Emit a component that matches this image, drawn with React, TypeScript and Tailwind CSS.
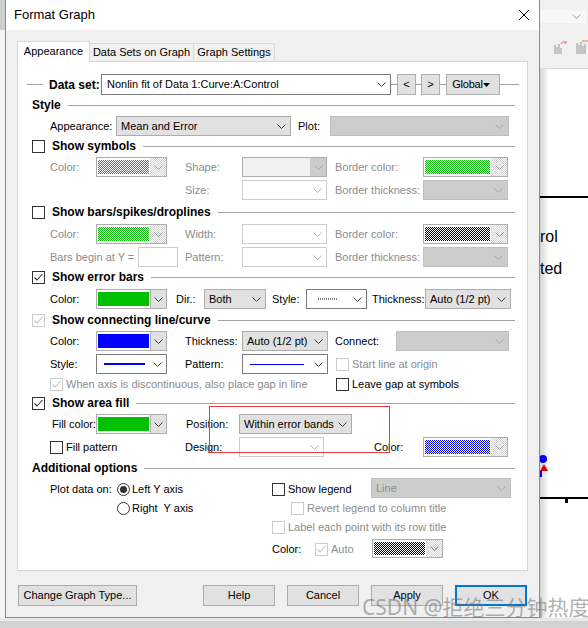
import clsx from "clsx";
import type { ReactNode } from "react";

type Tone = "gray" | "white" | "dark" | "off" | "offWhite" | "shape";

const toneBox: Record<Tone, string> = {
  gray: "border-[#adadad] bg-[#e1e1e1]",
  white: "border-[#adadad] bg-white",
  dark: "border-[#7a7a7a] bg-white",
  off: "border-[#bfbfbf] bg-[#cccccc] text-[#8c8c8c]",
  offWhite: "border-[#cccccc] bg-white",
  shape: "border-[#adadad] bg-[#f0f0f0]",
};

const toneArrow: Record<Tone, string> = {
  gray: "#3c3c3c",
  white: "#3c3c3c",
  dark: "#3c3c3c",
  off: "#a6a6a6",
  offWhite: "#b4b4b4",
  shape: "#a6a6a6",
};

const fills = {
  greenDots:
    "bg-[image:repeating-conic-gradient(#00b800_0%_25%,#ffffff_0%_50%)] bg-[length:2px_2px]",
  blackDots:
    "bg-[image:repeating-conic-gradient(#000000_0%_25%,#ffffff_0%_50%)] bg-[length:2px_2px]",
  blueDots:
    "bg-[image:repeating-conic-gradient(#0000ff_0%_25%,#ffffff_0%_50%)] bg-[length:2px_2px]",
  green: "bg-[#00c000]",
  blue: "bg-[#0000ff]",
};

const Chevron = ({ color }: { color: string }) => (
  <svg width="9" height="5" viewBox="0 0 9 5" className="shrink-0">
    <path d="M0.5 0.5 L4.5 4.5 L8.5 0.5" fill="none" stroke={color} strokeWidth="1" />
  </svg>
);

const Label = ({
  children,
  off,
  className,
}: {
  children: ReactNode;
  off?: boolean;
  className?: string;
}) => (
  <span
    className={clsx(
      "flex h-[20px] shrink-0 items-center whitespace-pre",
      off ? "text-[#8c8c8c]" : "text-black",
      className
    )}
  >
    {children}
  </span>
);

const Combo = ({
  tone,
  className,
  tall,
  children,
}: {
  tone: Tone;
  className: string;
  tall?: boolean;
  children?: ReactNode;
}) => (
  <div
    className={clsx(
      "flex shrink-0 items-stretch border",
      tall ? "h-[21px]" : "h-[20px]",
      toneBox[tone],
      className
    )}
  >
    <div className="flex min-w-0 flex-1 items-center overflow-hidden whitespace-nowrap pl-[4px]">
      {children}
    </div>
    {tone === "shape" ? (
      <div className="flex w-[16px] items-center justify-center bg-[#cccccc]">
        <Chevron color={toneArrow[tone]} />
      </div>
    ) : (
      <div className="flex w-[17px] items-center justify-center">
        <Chevron color={toneArrow[tone]} />
      </div>
    )}
  </div>
);

const Swatch = ({
  fill,
  live,
  className,
}: {
  fill: keyof typeof fills;
  live?: boolean;
  className: string;
}) => (
  <div className={clsx("flex shrink-0 border border-[#adadad]", className)}>
    <div className={clsx("my-[2px] ml-[1px] mr-[1px] flex-1", fills[fill])} />
    <div
      className={clsx(
        "flex w-[16px] items-center justify-center",
        live
          ? "border-l border-[#adadad] bg-[#e1e1e1]"
          : "bg-[image:repeating-conic-gradient(#d2d2d2_0%_25%,#ffffff_0%_50%)] bg-[length:2px_2px]"
      )}
    >
      <Chevron color={live ? "#3c3c3c" : "#8c8c8c"} />
    </div>
  </div>
);

const Box = ({ on, off }: { on?: boolean; off?: boolean }) => (
  <span
    className={clsx(
      "flex h-[13px] w-[13px] shrink-0 items-center justify-center border bg-white",
      off ? "border-[#cccccc]" : "border-[#333333]"
    )}
  >
    {on ? (
      <svg width="11" height="11" viewBox="0 0 11 11">
        <path
          d="M1.5 5.5 L4 8 L9.5 2"
          fill="none"
          stroke={off ? "#c2c2c2" : "#333333"}
          strokeWidth="1.1"
        />
      </svg>
    ) : null}
  </span>
);

const Radio = ({ on }: { on?: boolean }) => (
  <span className="flex h-[13px] w-[13px] shrink-0 items-center justify-center rounded-full border border-[#333333] bg-white">
    {on ? <span className="h-[7px] w-[7px] rounded-full bg-[#333333]" /> : null}
  </span>
);

const Header = ({
  box,
  className,
  children,
}: {
  box?: ReactNode;
  className: string;
  children: ReactNode;
}) => (
  <div className={clsx("flex items-start pl-[14px] pr-[12px]", className)}>
    <div className="flex h-[20px] flex-1 items-center">
      {box ? <span className="mr-[7px] flex">{box}</span> : null}
      <span className="whitespace-nowrap text-[12px] font-bold">{children}</span>
      <div className="ml-[7px] h-px flex-1 bg-[#a0a0a0]" />
    </div>
  </div>
);

const Btn = ({
  className,
  focus,
  children,
}: {
  className: string;
  focus?: boolean;
  children: ReactNode;
}) => (
  <div
    className={clsx(
      "flex shrink-0 items-center justify-center bg-[#e1e1e1]",
      focus ? "border-2 border-[#0078d7]" : "border border-[#adadad]",
      className
    )}
  >
    {children}
  </div>
);

const Dash = ({ className }: { className: string }) => (
  <div className={clsx("h-px shrink-0 bg-[#a0a0a0]", className)} />
);

function Panel() {
  return (
    <div className="relative z-0 -mt-px flex h-[510px] flex-col border border-[#d9d9d9] bg-white pt-[12px]">
      {/* data set selector */}
      <div className="flex h-[21px] items-center">
        <Dash className="ml-[9px] w-[16px]" />
        <span className="ml-[6px] w-[52px] shrink-0 text-[12px] font-bold">Data set:</span>
        <Combo tone="dark" tall className="w-[290px]">
          <span className="pl-px">Nonlin fit of Data 1:Curve:A:Control</span>
        </Combo>
        <Dash className="w-[6px]" />
        <Btn className="h-[21px] w-[19px]">&lt;</Btn>
        <Dash className="w-[5px]" />
        <Btn className="h-[21px] w-[19px]">&gt;</Btn>
        <Dash className="w-[6px]" />
        <Btn className="h-[21px] w-[54px] justify-between pl-[1px] pr-[5px]">
          <span className="tracking-[-0.2px]">Global</span>
          <svg width="7" height="4" viewBox="0 0 7 4">
            <path d="M0 0 H7 L3.5 4 Z" fill="#000" />
          </svg>
        </Btn>
        <Dash className="w-[19px]" />
      </div>

      <Header className="h-[21px]">Style</Header>
      <div className="flex h-[20px] items-start pl-[32px]">
        <Label className="w-[66px]">Appearance:</Label>
        <Combo tone="gray" className="w-[175px]">
          Mean and Error
        </Combo>
        <Label className="ml-[7px] w-[32px]">Plot:</Label>
        <Combo tone="off" className="w-[179px]" />
      </div>

      <Header className="h-[21px]" box={<Box />}>
        Show symbols
      </Header>
      <div className="flex h-[23px] items-start pl-[32px]">
        <Label off className="w-[46px]">Color:</Label>
        <Swatch fill="greenDots" className="h-[20px] w-[71px]" />
        <Label off className="ml-[18px] w-[57px]">Shape:</Label>
        <Combo tone="shape" className="w-[85px]" />
        <Label off className="ml-[8px] w-[88px]">Border color:</Label>
        <Swatch fill="greenDots" className="h-[20px] w-[85px]" />
      </div>
      <div className="flex h-[22px] items-start pl-[167px]">
        <Label off className="w-[57px]">Size:</Label>
        <Combo tone="offWhite" className="w-[85px]" />
        <Label off className="ml-[8px] w-[88px]">Border thickness:</Label>
        <Combo tone="off" className="w-[85px]" />
      </div>

      <Header className="h-[22px]" box={<Box />}>
        Show bars/spikes/droplines
      </Header>
      <div className="flex h-[23px] items-start pl-[32px]">
        <Label off className="w-[46px]">Color:</Label>
        <Swatch fill="greenDots" className="h-[20px] w-[71px]" />
        <Label off className="ml-[18px] w-[57px]">Width:</Label>
        <Combo tone="offWhite" className="w-[85px]" />
        <Label off className="ml-[8px] w-[88px]">Border color:</Label>
        <Swatch fill="blackDots" className="h-[20px] w-[85px]" />
      </div>
      <div className="flex h-[20px] items-start pl-[32px]">
        <Label off className="w-[88px]">Bars begin at Y =</Label>
        <div className="h-[20px] w-[40px] shrink-0 border border-[#cccccc] bg-white" />
        <Label off className="ml-[7px] w-[57px]">Pattern:</Label>
        <Combo tone="offWhite" className="w-[85px]" />
        <Label off className="ml-[8px] w-[88px]">Border thickness:</Label>
        <Combo tone="off" className="w-[85px]" />
      </div>

      <Header className="h-[22px]" box={<Box on />}>
        Show error bars
      </Header>
      <div className="flex h-[21px] items-start pl-[32px]">
        <Label className="w-[46px]">Color:</Label>
        <Swatch fill="green" live className="h-[20px] w-[71px]" />
        <Label className="ml-[9px] w-[28px]">Dir.:</Label>
        <Combo tone="gray" className="w-[62px]">
          Both
        </Combo>
        <Label className="ml-[6px] w-[34px]">Style:</Label>
        <Combo tone="dark" className="w-[61px]">
          <svg width="20" height="2" viewBox="0 0 20 2" className="ml-[7px]">
            <line x1="0" y1="1" x2="20" y2="1" stroke="#000" strokeWidth="1" strokeDasharray="1 1" />
          </svg>
        </Combo>
        <Label className="ml-[5px] w-[53px]">Thickness:</Label>
        <Combo tone="gray" className="w-[86px]">
          Auto (1/2 pt)
        </Combo>
      </div>

      <Header className="h-[21px]" box={<Box on off />}>
        Show connecting line/curve
      </Header>
      <div className="flex h-[23px] items-start pl-[32px]">
        <Label className="w-[46px]">Color:</Label>
        <Swatch fill="blue" live className="h-[20px] w-[71px]" />
        <Label className="ml-[18px] w-[57px]">Thickness:</Label>
        <Combo tone="gray" className="w-[86px]">
          Auto (1/2 pt)
        </Combo>
        <Label className="ml-[7px] w-[61px]">Connect:</Label>
        <Combo tone="off" className="w-[113px]" />
      </div>
      <div className="flex h-[20px] items-start pl-[32px]">
        <Label className="w-[46px]">Style:</Label>
        <Combo tone="dark" className="w-[71px]">
          <div className="ml-[3px] h-[2px] w-[41px] bg-[#0000ff]" />
        </Combo>
        <Label className="ml-[18px] w-[57px]">Pattern:</Label>
        <Combo tone="dark" className="w-[86px]">
          <div className="ml-[3px] h-px w-[54px] bg-[#0000ff]" />
        </Combo>
        <div className="ml-[8px] flex h-[20px] items-center">
          <Box off />
          <Label off className="ml-[3px]">Start line at origin</Label>
        </div>
      </div>
      <div className="flex h-[19px] items-start pl-[32px]">
        <div className="flex h-[20px] w-[286px] shrink-0 items-center">
          <Box on off />
          <Label off className="ml-[3px]">When axis is discontinuous, also place gap in line</Label>
        </div>
        <div className="flex h-[20px] items-center">
          <Box />
          <Label className="ml-[3px]">Leave gap at symbols</Label>
        </div>
      </div>

      <Header className="h-[21px]" box={<Box on />}>
        Show area fill
      </Header>
      <div className="flex h-[23px] items-start pl-[32px]">
        <Label className="w-[46px] pl-[2px]">Fill color:</Label>
        <Swatch fill="green" live className="h-[20px] w-[71px]" />
        <Label className="ml-[19px] w-[53px]">Position:</Label>
        <Combo tone="gray" className="w-[113px]">
          Within error bands
        </Combo>
      </div>
      <div className="flex h-[21px] items-start pl-[32px]">
        <div className="flex h-[20px] w-[135px] shrink-0 items-center">
          <Box />
          <Label className="ml-[3px]">Fill pattern</Label>
        </div>
        <Label className="w-[54px]">Design:</Label>
        <Combo tone="offWhite" className="w-[85px]" />
        <Label className="ml-[50px] w-[49px]">Color:</Label>
        <Swatch fill="blueDots" className="h-[20px] w-[85px]" />
      </div>

      <Header className="h-[21px]">Additional options</Header>
      <div className="flex h-[19px] items-start pl-[32px]">
        <Label className="w-[67px]">Plot data on:</Label>
        <div className="flex h-[20px] w-[155px] shrink-0 items-center">
          <Radio on />
          <Label className="ml-[2px]">Left Y axis</Label>
        </div>
        <div className="flex h-[20px] w-[99px] shrink-0 items-center">
          <Box />
          <Label className="ml-[3px]">Show legend</Label>
        </div>
        <Combo tone="off" className="-mt-px w-[140px]">
          Line
        </Combo>
      </div>
      <div className="flex h-[19px] items-start pl-[99px]">
        <div className="flex h-[20px] w-[174px] shrink-0 items-center">
          <Radio />
          <Label className="ml-[2px]">Right  Y axis</Label>
        </div>
        <div className="flex h-[20px] items-center">
          <Box off />
          <Label off className="ml-[3px]">Revert legend to column title</Label>
        </div>
      </div>
      <div className="flex h-[22px] items-start pl-[254px]">
        <div className="flex h-[20px] items-center">
          <Box off />
          <Label off className="ml-[3px]">Label each point with its row title</Label>
        </div>
      </div>
      <div className="flex h-[20px] items-start pl-[254px]">
        <Label className="w-[43px]">Color:</Label>
        <div className="flex h-[20px] w-[57px] shrink-0 items-center">
          <Box on off />
          <Label off className="ml-[3px]">Auto</Label>
        </div>
        <Swatch fill="blackDots" className="h-[19px] w-[71px]" />
      </div>
    </div>
  );
}

function Dialog() {
  return (
    <div className="flex w-[535px] shrink-0 flex-col border-x border-b border-[#8a8a8a]">
      <div className="flex h-[30px] shrink-0 items-center bg-white pl-[8px] pr-[10px]">
        <span className="text-[13px]">Format Graph</span>
        <svg width="10" height="10" viewBox="0 0 10 10" className="ml-auto">
          <path d="M0 0 L10 10 M10 0 L0 10" stroke="#000" strokeWidth="1" />
        </svg>
      </div>
      <div className="flex flex-1 flex-col bg-[#f0f0f0] px-[11px] pt-[11px]">
        <div className="relative z-10 flex h-[21px] items-end">
          <div className="flex h-[21px] w-[73px] items-center justify-center border-x border-t border-[#d9d9d9] bg-white pb-px">
            Appearance
          </div>
          <div className="mb-px flex h-[18px] w-[104px] items-center justify-center border-r border-t border-[#d9d9d9] bg-[#f0f0f0]">
            Data Sets on Graph
          </div>
          <div className="mb-px flex h-[18px] w-[81px] items-center justify-center border-r border-t border-[#d9d9d9] bg-[#f0f0f0]">
            Graph Settings
          </div>
        </div>
        <Panel />
        <div className="mt-[14px] flex h-[21px] gap-[12px] px-px">
          <Btn className="h-[21px] w-[119px]">Change Graph Type...</Btn>
          <Btn className="ml-auto h-[21px] w-[72px]">Help</Btn>
          <Btn className="h-[21px] w-[72px]">Cancel</Btn>
          <Btn className="h-[21px] w-[72px]">Apply</Btn>
          <Btn focus className="h-[21px] w-[72px]">
            OK
          </Btn>
        </div>
      </div>
    </div>
  );
}

function GraphBehind() {
  return (
    <div className="flex w-[48px] shrink-0 flex-col">
      <div className="h-[69px] shrink-0 border-b border-[#dcdcdc] bg-[#f0f0f0] pt-[10px]">
        <div className="flex h-[13px] w-[46px] items-center justify-end bg-[#f8f8f8] pr-[5px]">
          <Chevron color="#9a9a9a" />
        </div>
        <div className="mt-[16px] flex items-end gap-[8px] pl-[14px]">
          <svg width="14" height="16" viewBox="0 0 14 16">
            <path d="M1 6 V15 M3 8 V15 M5 5 V15 M7 9 V15" stroke="#9a9a9a" strokeWidth="1" />
            <path d="M7 5 Q9 1 12 4 M10 4 H12 V2" fill="none" stroke="#e07a70" strokeWidth="1" />
          </svg>
          <svg width="12" height="16" viewBox="0 0 12 16">
            <path d="M1 4 V15 M3 6 V15 M5 3 V15 M7 7 V15 M9 5 V15" stroke="#9a9a9a" strokeWidth="1" />
            <path d="M6 2 H12" stroke="#e07a70" strokeWidth="1" />
          </svg>
        </div>
      </div>
      <div className="relative flex-1 overflow-hidden bg-white">
        <div className="absolute left-0 top-0 h-full w-[9px] bg-linear-to-r from-[#d4d4d4] to-white" />
        <div className="absolute left-0 top-[127px] h-[2px] w-full bg-black" />
        <span className="absolute left-0 top-[159px] font-['Liberation_Sans',Arial,sans-serif] text-[16px] leading-[18px]">
          rol
        </span>
        <span className="absolute left-0 top-[191px] font-['Liberation_Sans',Arial,sans-serif] text-[16px] leading-[18px]">
          ted
        </span>
        <div className="absolute left-[-1px] top-[386px] h-[8px] w-[8px] rounded-full bg-[#0000ff]" />
        <svg width="8" height="7" viewBox="0 0 8 7" className="absolute left-0 top-[395px]">
          <path d="M4 0 L8 7 H0 Z" fill="#e00000" />
        </svg>
        <div className="absolute left-0 top-[402px] h-[6px] w-[2px] bg-[#0000ff]" />
        <div className="absolute left-0 top-[428px] h-[2px] w-full bg-black" />
        <div className="absolute left-[25px] top-[430px] h-[4px] w-[3px] bg-black" />
      </div>
    </div>
  );
}

export default function App() {
  return (
    <div className="relative flex h-[628px] w-[588px] flex-col overflow-hidden bg-[#d6d6d6] font-['Liberation_Sans',Arial,sans-serif] text-[11px] text-black">
      <div className="flex h-[618px] shrink-0">
        <div className="flex w-[5px] shrink-0 flex-col">
          <div className="h-[30px] bg-[#cfcfcf]" />
          <div className="flex-1 bg-[#f4f4f4]" />
        </div>
        <Dialog />
        <GraphBehind />
      </div>
      <div className="flex-1 border-t-[3px] border-[#e9e9e9] bg-[#d2d2d2]" />

      <div className="pointer-events-none absolute left-[209px] top-[406px] h-[47px] w-[181px] border border-[#e8393b]" />
      <span className="pointer-events-none absolute left-[362px] top-[594px] whitespace-nowrap font-['Noto_Sans','Noto_Sans_CJK_SC',sans-serif] text-[21px] leading-[26px] text-[rgba(110,110,110,0.55)]">
        CSDN @拒绝三分钟热度
      </span>
    </div>
  );
}
